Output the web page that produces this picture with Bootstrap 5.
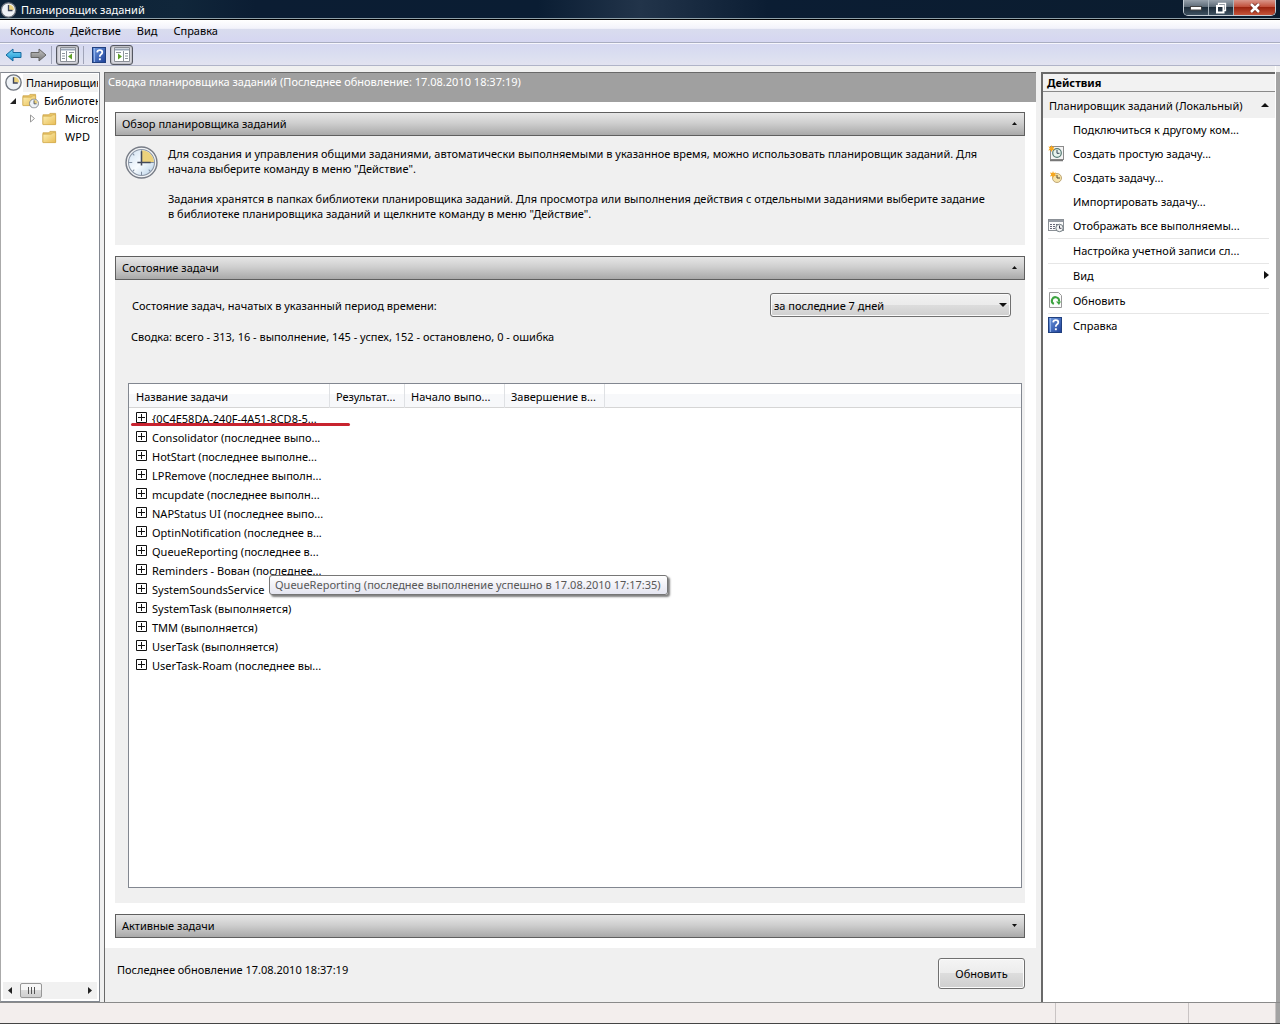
<!DOCTYPE html>
<html lang="ru">
<head>
<meta charset="utf-8">
<meta name="viewport" content="width=device-width, initial-scale=1">
<title>Планировщик заданий</title>
<link href="https://cdn.jsdelivr.net/npm/bootstrap@5.3.0/dist/css/bootstrap.min.css" rel="stylesheet">
<style>
body{font-family:"Noto Sans","Open Sans",sans-serif;font-size:11px;line-height:15px;color:#000;background:#f0f0f0}
a{color:inherit;text-decoration:none}
button{font:inherit;color:inherit}
svg{display:block;flex:none}
.titlebar{height:20px;background:linear-gradient(90deg,#0c2237 0,#10263a 14%,#0b1d33 20%,#0a1d33 42%,#22344a 50%,#0b1d33 60%,#0b1c2e 100%);color:#fff;border-bottom:1px solid #000;box-shadow:inset 0 -1px #8fa0a8}
.winbtns{height:16px;margin-right:4px;border:1px solid #c3ccd4;border-top:0;border-radius:0 0 5px 5px;overflow:hidden}
.winbtns button{border:0;padding:0;width:25px;height:15px;display:flex;align-items:center;justify-content:center;background:linear-gradient(#96a0aa 0,#5d6b78 45%,#1d2c3a 50%,#3f5261 100%);border-right:1px solid #aab5bd}
.winbtns button.closebtn{width:41px;border:0;background:linear-gradient(#d9968a 0,#c2503c 45%,#9c2410 50%,#c5553a 100%)}
.menubar{height:23px;background:linear-gradient(#fff 0,#f3f3fb 38%,#d9dcee 42%,#d5d6f1 100%);border-bottom:1px solid #a9adc0;padding:0 10px 2px;gap:16px}
.toolbar{height:23px;background:linear-gradient(#d6d8f1,#dadef0 50%,#e2e3f0);border-top:1px solid #f6f6fc;border-bottom:1px solid #b0b4c8;padding:0 5px}
.toolbar button{border:0;background:none;padding:0;display:flex;align-items:center;justify-content:center}
.toolbar .pressed{width:23px;height:20px;border:1px solid #555862;border-radius:3px;background:#dcdce4;box-shadow:inset 0 0 2px #777}
.vsep{width:1px;height:18px;background:#a0a4b8}
.panes{padding-top:6px;gap:4px;border-right:1px solid #fff}
.edge{width:4px;margin-top:6px;background:#a3a3a3}
.treepane{width:100px;border:1px solid #828790;border-left-color:#aaa;background:#fff;padding:1px 1px 0 0}
.treepane li{height:18px;padding-bottom:1px;white-space:nowrap;overflow:hidden}
.treepane .rootrow{background:linear-gradient(90deg,#fff 22px,#f2f2f2 22px)}
.lv1{padding-left:7px}
.lv2{padding-left:27px}
.twist{width:14px}
.hscroll{height:17px;background:#f1f1f1;margin:0 1px 2px 2px}
.thumb{width:22px;height:15px;border:1px solid #979797;border-radius:2px;background:linear-gradient(#f7f7f7 45%,#dcdcdc 50%,#cfcfcf)}
.mainpane{border-left:1px solid #696969;border-top:1px solid #696969;background:#fff;margin-right:1px}
.summary{height:29px;background:#a0a0a0;color:#fff;padding:1px 3px}
.sections{padding:10px 11px 10px 10px;gap:11px}
.sechead{height:24px;width:100%;border:1px solid #5f5f5f;padding:0 7px 2px 6px;background:linear-gradient(#e6e6e6,#cfcfcf 45%,#a9a9a9);text-align:left}
.secbody{background:#f0f0f0}
.intro{padding:10px 10px 22px;gap:10px;min-height:109px}
.intro p{margin:0 0 15px}
.status{padding:13px 3px 15px 13px}
.rangebox{width:241px;margin-right:11px}
.rangebox select{width:100%;height:24px;appearance:none;border:1px solid #707070;border-radius:3px;padding:0 3px;font:inherit;color:#000;background:linear-gradient(#f2f2f2,#ebebeb 50%,#dddddd 50%,#cfcfcf);box-shadow:inset 0 0 0 1px #fafafa}
.rangebox svg{right:4px;top:10px;pointer-events:none}
.totals{margin-top:12px;padding-left:3px}
.tasklist{border:1px solid #828790;background:#fff;margin-top:39px}
.tasklist table{width:476px;table-layout:fixed;border-collapse:separate;border-spacing:0}
.headstrip{left:0;right:0;top:0;height:24px;background:linear-gradient(#fff 45%,#f7f8fa 45%,#f7f8fa);border-bottom:1px solid #d5d5d5}
.tasklist th{position:relative;font-weight:400;height:24px;padding:1px 6px;border-right:1px solid #dfe1e4;white-space:nowrap}
.tasklist th:first-child{padding-left:7px}
.tasklist td{height:19px;padding:0 0 0 7px;white-space:nowrap}
.tasklist .spacer td{height:1px}
.colname{width:201px}.colres{width:75px}.coltime{width:100px}
.expander{border:0;background:none;padding:0 0 2px;margin-right:5px}
.redline{left:2px;top:39px;width:219px;height:3px;background:#c8232f;border-radius:2px}
.hint{left:140px;top:191px;height:20px;border:1px solid #767676;border-radius:3px;padding:0 6px 0 5px;line-height:17px;color:#575757;background:linear-gradient(#fff,#e4e5f0);box-shadow:2px 2px 2px rgba(0,0,0,.5);white-space:nowrap}
.foot{height:54px;background:#f0f0f0;padding:10px 11px 10px 12px}
.foot button{width:87px;height:31px;border:1px solid #707070;border-radius:3px;background:linear-gradient(#f4f4f4,#ececec 50%,#dddddd 50%,#cfcfcf);box-shadow:inset 0 0 0 1px #fcfcfc}
.foot span{padding-top:4px}
.actions{width:234px;border-left:2px solid #696969;border-top:2px solid #696969;background:#fff}
.acthead{height:18px;background:#f2f2f2;border-bottom:1px solid #8a8a8a;padding:1px 4px;font-weight:700}
.actsub{height:26px;width:100%;background:#f0f0f0;border:0;padding:0 6px;text-align:left}
.actlist{padding:0 6px 0 5px}
.actlist li{height:24px}
.actlist .ruled{height:25px;border-top:1px solid #e6e6e6}
.actlist a{height:24px;display:flex;align-items:center;padding-bottom:2px}
.acticon{width:25px;flex:none}
.statusbar{height:22px;border-top:1px solid #8a8a8a;border-bottom:1px solid #444;background:#f3eeed}
.statusbar div{border-right:1px solid #c9c4c4}
.cell2{width:133px}.cell3{width:87px}
</style>
<script src="https://cdn.jsdelivr.net/npm/bootstrap@5.3.0/dist/js/bootstrap.bundle.min.js"></script>
</head>
<body class="d-flex flex-column min-vh-100">
<svg width="0" height="0" class="position-absolute" aria-hidden="true">
<defs>
<linearGradient id="fold" x1="0" y1="0" x2="1" y2="1"><stop offset="0" stop-color="#fdf0b4"/><stop offset="1" stop-color="#e8bd55"/></linearGradient>
<linearGradient id="glass" x1="0" y1="0" x2="1" y2="1"><stop offset="0" stop-color="#cfe0f0"/><stop offset=".5" stop-color="#f8fcff"/><stop offset="1" stop-color="#b4cfe6"/></linearGradient>
<linearGradient id="blue" x1="0" y1="0" x2="0" y2="1"><stop offset="0" stop-color="#7fd8f6"/><stop offset="1" stop-color="#1593d2"/></linearGradient>
<linearGradient id="grey" x1="0" y1="0" x2="0" y2="1"><stop offset="0" stop-color="#c4c4c4"/><stop offset="1" stop-color="#777"/></linearGradient>
<linearGradient id="book" x1="0" y1="0" x2="1" y2="1"><stop offset="0" stop-color="#6f9be0"/><stop offset="1" stop-color="#1d3f98"/></linearGradient>
<symbol id="clock" viewBox="0 0 32 32"><circle cx="16" cy="16" r="15" fill="#f2f4f6" stroke="#777c86" stroke-width="1.4"/><circle cx="16" cy="16" r="12.6" fill="url(#glass)" stroke="#8a95a5"/><path d="M16 16V4A12 12 0 0 1 28 16Z" fill="#ecd27c"/><path d="M16 4v3M16 25v3M4 16h3M25 16h3M7.500 7.500l1.500 1.500M23 23l1.500 1.500M7.500 24.500 9 23" stroke="#7f8da0"/><path d="M16 5V19M12 16H25" stroke="#424a5c" stroke-width="1.500" fill="none"/></symbol>
<symbol id="clocksm" viewBox="0 0 16 16"><circle cx="8" cy="8" r="7.200" fill="#eef2f6" stroke="#70767f" stroke-width="1.300"/><path d="M8 8V2.500A5.500 5.500 0 0 1 13.500 8Z" fill="#ecd27c"/><path d="M8 3V8.500H12" stroke="#3e4658" stroke-width="1.300" fill="none"/></symbol>
<symbol id="folder" viewBox="0 0 16 14"><path d="M1 2.500 7 2.500 8.500 1H14.500V12.500H1Z" fill="#e9c465" stroke="#c9a145" stroke-width=".8"/><path d="M1 4H10L11.500 2.500H14.500V13H1Z" fill="url(#fold)" stroke="#cfa84b" stroke-width=".7"/></symbol>
<symbol id="help" viewBox="0 0 14 16"><rect x=".5" y=".5" width="13" height="15" fill="url(#book)" stroke="#21407f"/><path d="M2.500 1V15" stroke="#91b2ea"/><path d="M5.200 5.400Q5.400 3.200 7.800 3.200 10.300 3.200 10.300 5.300 10.300 6.600 8.900 7.500 7.800 8.200 7.800 9.800" fill="none" stroke="#fff" stroke-width="1.800"/><rect x="6.900" y="11.300" width="1.900" height="1.900" fill="#fff"/></symbol>
<symbol id="plus" viewBox="0 0 11 11"><path d="M.5 .5H10.500V10.500H.5ZM5.500 2V9M2 5.500H9" fill="none" stroke="#111"/></symbol>
<symbol id="star" viewBox="0 0 10 10"><path d="M5 0 6.200 3 9.500 2 7.600 5 9.800 7.500 6.500 7.100 5 10 3.800 7 .4 7.700 2.400 5 .6 2.200 3.900 3Z" fill="#f6a821"/></symbol>
</defs>
</svg>

<header>
<div class="titlebar d-flex align-items-start justify-content-between">
<div class="d-flex align-items-center gap-1 h-100"><svg width="17" height="16"><use href="#clocksm"/></svg><span>Планировщик заданий</span></div>
<div class="winbtns d-flex">
<button aria-label="Свернуть"><svg width="12" height="6"><rect x=".5" y="1.500" width="11" height="3.500" fill="#fff" stroke="#444"/></svg></button>
<button aria-label="Восстановить"><svg width="12" height="12"><path d="M3.500 3V1.500H10.500V8.500H9" fill="none" stroke="#fff" stroke-width="1.300"/><rect x="2" y="4" width="6.500" height="6.500" fill="none" stroke="#fff" stroke-width="2"/></svg></button>
<button class="closebtn" aria-label="Закрыть"><svg width="12" height="10"><path d="M2 1 10 9M10 1 2 9" stroke="#6b2a20" stroke-width="4"/><path d="M2 1 10 9M10 1 2 9" stroke="#fff" stroke-width="2.500"/></svg></button>
</div>
</div>
<nav class="menubar d-flex align-items-center"><a href="#">Консоль</a><a href="#">Действие</a><a href="#">Вид</a><a href="#">Справка</a></nav>
<div class="toolbar d-flex align-items-center">
<button aria-label="Назад"><svg width="17" height="14" viewBox="0 0 17 14"><path d="M1 7 8 1V4.500H16V9.500H8V13Z" fill="url(#blue)" stroke="#17699e"/></svg></button>
<button class="ms-2 me-1" aria-label="Вперед"><svg width="17" height="14" viewBox="0 0 17 14"><path d="M16 7 9 1V4.500H1V9.500H9V13Z" fill="url(#grey)" stroke="#666"/></svg></button>
<span class="vsep me-1"></span>
<button class="pressed" aria-label="Дерево консоли"><svg width="16" height="15" viewBox="0 0 16 15"><path d="M.5 .5H15.500V14.500H.5Z" fill="#fff" stroke="#8b8f96"/><path d="M1 2.500H15" stroke="#9aa6b8" stroke-width="2"/><path d="M6.500 4V14M2 6.500H5M2 9H5M2 11.500H5M9 5.500h5" stroke="#8e949c"/><path d="M12 6.500V12.500L8 9.500Z" fill="#5f9f28"/></svg></button>
<span class="vsep ms-1 me-2"></span>
<button aria-label="Справка"><svg width="14" height="16"><use href="#help"/></svg></button>
<button class="pressed ms-1" aria-label="Панель действий"><svg width="16" height="15" viewBox="0 0 16 15"><path d="M.5 .5H15.500V14.500H.5Z" fill="#fff" stroke="#8b8f96"/><path d="M1 2.500H15" stroke="#9aa6b8" stroke-width="2"/><path d="M9.500 4V14M11 6.500H14M11 9H14M11 11.500H14M2 5.500h5" stroke="#8e949c"/><path d="M4 6.500V12.500L8 9.500Z" fill="#5f9f28"/></svg></button>
</div>
</header>

<div class="d-flex flex-fill">
<div class="panes d-flex flex-fill">
<aside class="treepane d-flex flex-column flex-shrink-0">
<ul class="list-unstyled mb-0 flex-fill">
<li class="rootrow d-flex align-items-center"><svg class="mx-1" width="17" height="17"><use href="#clocksm"/></svg><a href="#">Планировщик</a></li>
<li class="lv1 d-flex align-items-center"><svg class="twist" width="8" height="8" viewBox="0 0 14 8"><path d="M8 1V7H2Z" fill="#222"/></svg><svg class="me-1" width="18" height="16" viewBox="0 0 18 16"><use href="#folder" width="15" height="14"/><use href="#clocksm" x="7" y="5.500" width="10" height="10"/></svg><a href="#">Библиотека</a></li>
<li class="lv2 d-flex align-items-center"><svg class="twist" width="14" height="9" viewBox="0 0 14 9"><path d="M2.500 1V8L6.500 4.500Z" fill="#fff" stroke="#999"/></svg><svg width="15" height="14"><use href="#folder"/></svg><a class="ps-1 ms-1" href="#">Microsoft</a></li>
<li class="lv2 d-flex align-items-center"><span class="twist flex-shrink-0"></span><svg width="15" height="14"><use href="#folder"/></svg><a class="ps-1 ms-1" href="#">WPD</a></li>
</ul>
<div class="hscroll d-flex align-items-center">
<svg width="17" height="9" viewBox="0 0 17 9"><path d="M9 1V8L5 4.500Z" fill="#222"/></svg>
<span class="thumb d-flex align-items-center justify-content-center"><svg width="9" height="7"><path d="M1.500 0V7M4.500 0V7M7.500 0V7" stroke="#555"/></svg></span>
<svg class="ms-auto" width="17" height="9" viewBox="0 0 17 9"><path d="M8 1V8L12 4.500Z" fill="#222"/></svg>
</div>
</aside>

<main class="mainpane d-flex flex-column flex-fill">
<div class="summary">Сводка планировщика заданий (Последнее обновление: 17.08.2010 18:37:19)</div>
<div class="sections d-flex flex-column flex-fill">
<section>
<button class="sechead d-flex align-items-center justify-content-between"><span>Обзор планировщика заданий</span><svg width="5" height="3"><path d="M0 3 2.500 0 5 3Z" fill="#111"/></svg></button>
<div class="secbody intro d-flex">
<svg width="33" height="33"><use href="#clock"/></svg>
<div>
<p>Для создания и управления общими заданиями, автоматически выполняемыми в указанное время, можно использовать планировщик заданий. Для<br>начала выберите команду в меню "Действие".</p>
<p class="mb-0">Задания хранятся в папках библиотеки планировщика заданий. Для просмотра или выполнения действия с отдельными заданиями выберите задание<br>в библиотеке планировщика заданий и щелкните команду в меню "Действие".</p>
</div>
</div>
</section>
<section class="d-flex flex-column flex-fill">
<button class="sechead d-flex align-items-center justify-content-between"><span>Состояние задачи</span><svg width="5" height="3"><path d="M0 3 2.500 0 5 3Z" fill="#111"/></svg></button>
<div class="secbody status d-flex flex-column flex-fill">
<div class="d-flex align-items-center justify-content-between">
<label class="ms-1" for="range">Состояние задач, начатых в указанный период времени:</label>
<div class="rangebox position-relative"><select id="range"><option>за последние 7 дней</option><option>за последние 24 часа</option></select><svg class="position-absolute" width="8" height="4"><path d="M0 0H8L4 4Z" fill="#111"/></svg></div>
</div>
<div class="totals">Сводка: всего - 313, 16 - выполнение, 145 - успех, 152 - остановлено, 0 - ошибка</div>
<div class="tasklist position-relative flex-fill">
<div class="headstrip position-absolute"></div>
<table>
<colgroup><col class="colname"><col class="colres"><col class="coltime"><col class="coltime"></colgroup>
<thead><tr><th>Название задачи</th><th>Результат...</th><th>Начало выпо...</th><th>Завершение в...</th></tr></thead>
<tbody>
<tr class="spacer"><td colspan="4"></td></tr>
<tr><td colspan="4"><div class="d-flex align-items-center"><button class="expander" aria-label="Развернуть"><svg width="11" height="11"><use href="#plus"/></svg></button>{0C4E58DA-240F-4A51-8CD8-5...</div></td></tr>
<tr><td colspan="4"><div class="d-flex align-items-center"><button class="expander" aria-label="Развернуть"><svg width="11" height="11"><use href="#plus"/></svg></button>Consolidator (последнее выпо...</div></td></tr>
<tr><td colspan="4"><div class="d-flex align-items-center"><button class="expander" aria-label="Развернуть"><svg width="11" height="11"><use href="#plus"/></svg></button>HotStart (последнее выполне...</div></td></tr>
<tr><td colspan="4"><div class="d-flex align-items-center"><button class="expander" aria-label="Развернуть"><svg width="11" height="11"><use href="#plus"/></svg></button>LPRemove (последнее выполн...</div></td></tr>
<tr><td colspan="4"><div class="d-flex align-items-center"><button class="expander" aria-label="Развернуть"><svg width="11" height="11"><use href="#plus"/></svg></button>mcupdate (последнее выполн...</div></td></tr>
<tr><td colspan="4"><div class="d-flex align-items-center"><button class="expander" aria-label="Развернуть"><svg width="11" height="11"><use href="#plus"/></svg></button>NAPStatus UI (последнее выпо...</div></td></tr>
<tr><td colspan="4"><div class="d-flex align-items-center"><button class="expander" aria-label="Развернуть"><svg width="11" height="11"><use href="#plus"/></svg></button>OptinNotification (последнее в...</div></td></tr>
<tr><td colspan="4"><div class="d-flex align-items-center"><button class="expander" aria-label="Развернуть"><svg width="11" height="11"><use href="#plus"/></svg></button>QueueReporting (последнее в...</div></td></tr>
<tr><td colspan="4"><div class="d-flex align-items-center"><button class="expander" aria-label="Развернуть"><svg width="11" height="11"><use href="#plus"/></svg></button>Reminders - Вован (последнее...</div></td></tr>
<tr><td colspan="4"><div class="d-flex align-items-center"><button class="expander" aria-label="Развернуть"><svg width="11" height="11"><use href="#plus"/></svg></button>SystemSoundsService</div></td></tr>
<tr><td colspan="4"><div class="d-flex align-items-center"><button class="expander" aria-label="Развернуть"><svg width="11" height="11"><use href="#plus"/></svg></button>SystemTask (выполняется)</div></td></tr>
<tr><td colspan="4"><div class="d-flex align-items-center"><button class="expander" aria-label="Развернуть"><svg width="11" height="11"><use href="#plus"/></svg></button>TMM (выполняется)</div></td></tr>
<tr><td colspan="4"><div class="d-flex align-items-center"><button class="expander" aria-label="Развернуть"><svg width="11" height="11"><use href="#plus"/></svg></button>UserTask (выполняется)</div></td></tr>
<tr><td colspan="4"><div class="d-flex align-items-center"><button class="expander" aria-label="Развернуть"><svg width="11" height="11"><use href="#plus"/></svg></button>UserTask-Roam (последнее вы...</div></td></tr>
</tbody>
</table>
<div class="redline position-absolute"></div>
<div class="hint position-absolute" role="tooltip">QueueReporting (последнее выполнение успешно в 17.08.2010 17:17:35)</div>
</div>
</div>
</section>
<section>
<button class="sechead d-flex align-items-center justify-content-between"><span>Активные задачи</span><svg width="5" height="3"><path d="M0 0H5L2.500 3Z" fill="#111"/></svg></button>
</section>
</div>
<div class="foot d-flex justify-content-between"><span>Последнее обновление 17.08.2010 18:37:19</span><button>Обновить</button></div>
</main>

<aside class="actions flex-shrink-0">
<div class="acthead">Действия</div>
<button class="actsub d-flex align-items-center justify-content-between"><span>Планировщик заданий (Локальный)</span><svg width="8" height="4"><path d="M0 4 4 0 8 4Z" fill="#111"/></svg></button>
<ul class="actlist list-unstyled mb-0">
<li><a href="#"><span class="acticon"></span>Подключиться к другому ком...</a></li>
<li><a href="#"><span class="acticon"><svg width="16" height="17" viewBox="0 0 16 17"><rect x="2.500" y="1.500" width="13" height="13" fill="#f4f4f4" stroke="#8b8b8b"/><path d="M2 15.500H15" stroke="#777" stroke-width="1.500"/><circle cx="9" cy="8" r="4.300" fill="#e8f3ee" stroke="#567b74" stroke-width="1.200"/><path d="M9 5V8.300H11.500" fill="none" stroke="#345"/><use href="#star" width="7" height="7"/></svg></span>Создать простую задачу...</a></li>
<li><a href="#"><span class="acticon"><svg width="16" height="16" viewBox="0 0 16 16"><circle cx="9" cy="9" r="4.500" fill="#f6e3a8" stroke="#c0a878"/><path d="M9 6V9H12" fill="none" stroke="#594a30"/><use href="#star" x="1.500" y="2" width="7" height="7"/></svg></span>Создать задачу...</a></li>
<li><a href="#"><span class="acticon"></span>Импортировать задачу...</a></li>
<li><a href="#"><span class="acticon"><svg width="16" height="15" viewBox="0 0 16 15"><rect x=".5" y="1.500" width="15" height="11" fill="#fafafa" stroke="#8b9096"/><path d="M1 3H15" stroke="#949aa3" stroke-width="2"/><path d="M2 6.500H4M5 6.500H7M8 6.500H10M2 8.500H4M5 8.500H7M2 10.500H4M5 10.500H7" stroke="#667"/><circle cx="11.500" cy="10" r="3.700" fill="#f5f5f5" stroke="#6e7a80"/><path d="M11.500 7.500V10.300H13.500" fill="none" stroke="#445"/></svg></span>Отображать все выполняемы...</a></li>
<li class="ruled"><a href="#"><span class="acticon"></span>Настройка учетной записи сл...</a></li>
<li class="ruled"><a href="#"><span class="acticon"></span>Вид<svg class="ms-auto" width="5" height="8"><path d="M0 0V8L5 4Z" fill="#111"/></svg></a></li>
<li class="ruled"><a href="#"><span class="acticon"><svg width="15" height="16" viewBox="0 0 15 16"><path d="M1.500 .5H10.500L13.500 3.500V15.500H1.500Z" fill="#fcfcfc" stroke="#999"/><path d="M5.800 12A3.600 3.600 0 1 1 11 9.500" fill="none" stroke="#3ba23e" stroke-width="2"/><path d="M8 9.500H13L11 13Z" fill="#3ba23e"/></svg></span>Обновить</a></li>
<li class="ruled"><a href="#"><span class="acticon"><svg width="14" height="16"><use href="#help"/></svg></span>Справка</a></li>
</ul>
</aside>
</div>
<div class="edge"></div>
</div>
<footer class="statusbar d-flex"><div class="flex-fill"></div><div class="cell2"></div><div class="cell3"></div><span class="edge mt-0"></span></footer>
</body>
</html>
